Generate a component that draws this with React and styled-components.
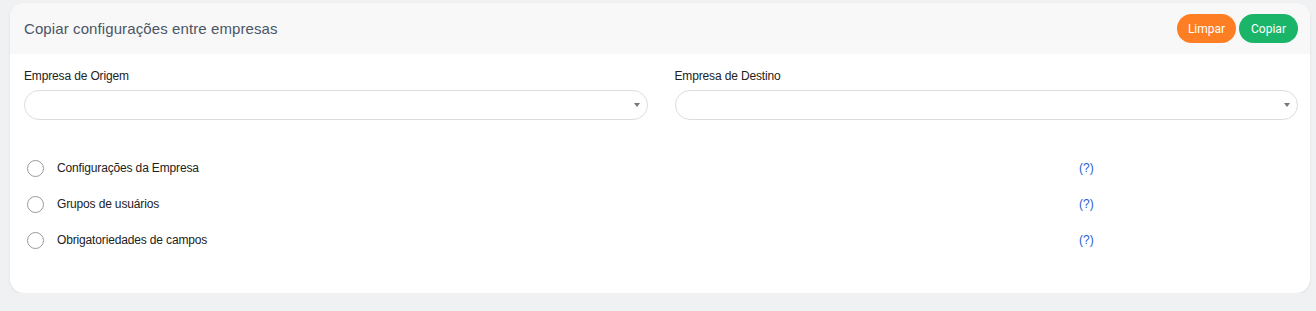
import styled, { createGlobalStyle } from 'styled-components'

const GlobalStyle = createGlobalStyle`
    html, body {
        margin: 0;
        padding: 0;
        background: #f0f1f3;
        font-family: "Liberation Sans", Arial, sans-serif;
    }
`;

const Page = styled.div`
    padding: 3px 6px 0 10px;
`;

const Card = styled.div`
    background: #ffffff;
    border-radius: 14px;
    box-shadow: 0 1px 3px rgba(0, 0, 0, 0.08);
    overflow: hidden;
    height: 290px;
`;

const Header = styled.div`
    display: flex;
    flex-direction: row;
    justify-content: space-between;
    align-items: center;
    background: #f8f8f8;
    height: 51px;
    padding: 0 12px 0 14px;
`;

const Title = styled.span`
    font-size: 15px;
    letter-spacing: 0.1px;
    color: #4a5566;
`;

const Actions = styled.div`
    display: flex;
    gap: 3px;
`;

const ActionButton = styled.button`
    background-color: ${p => p.$color};
    color: #ffffff;
    border: none;
    outline: none;
    border-radius: 15px;
    height: 29px;
    padding: 0 9px;
    min-width: 59px;
    font-family: Roboto, "Liberation Sans", sans-serif;
    font-size: 12px;
    cursor: pointer;
`;

const Body = styled.div`
    padding: 15px 12px 0 14px;
`;

const FieldsGrid = styled.div`
    display: grid;
    grid-template-columns: 1fr 1fr;
    column-gap: 27px;
`;

const Field = styled.div`
    display: flex;
    flex-direction: column;
`;

const Label = styled.label`
    font-size: 12px;
    letter-spacing: -0.15px;
    color: #222;
    margin-bottom: 7px;
`;

const SelectBox = styled.div`
    position: relative;
    height: 28px;
    border: 1px solid #dcdcdc;
    border-radius: 15px;
    background: #fff;
`;

const Caret = styled.span`
    position: absolute;
    right: 7px;
    top: 12px;
    width: 0;
    height: 0;
    border-left: 3px solid transparent;
    border-right: 3px solid transparent;
    border-top: 4px solid #777;
`;

const OptionList = styled.div`
    display: flex;
    flex-direction: column;
    margin-top: 30px;
`;

const OptionRow = styled.div`
    display: grid;
    grid-template-columns: 1055px auto;
    align-items: center;
    height: 36px;
`;

const OptionLabel = styled.div`
    display: flex;
    align-items: center;
    gap: 13px;
    padding-left: 3px;
    font-size: 12px;
    letter-spacing: -0.15px;
    color: #222;
`;

const Radio = styled.span`
    width: 15px;
    height: 15px;
    border: 1px solid #999;
    border-radius: 50%;
    background: #fff;
`;

const Help = styled.span`
    font-size: 12px;
    color: #1f5fd1;
    cursor: pointer;
`;

const options = [
    'Configurações da Empresa',
    'Grupos de usuários',
    'Obrigatoriedades de campos',
];

export default function App() {
    return (
        <Page>
            <GlobalStyle />
            <Card>
                <Header>
                    <Title>Copiar configurações entre empresas</Title>
                    <Actions>
                        <ActionButton $color="#fd7e23">Limpar</ActionButton>
                        <ActionButton $color="#1ab569">Copiar</ActionButton>
                    </Actions>
                </Header>
                <Body>
                    <FieldsGrid>
                        <Field>
                            <Label>Empresa de Origem</Label>
                            <SelectBox><Caret /></SelectBox>
                        </Field>
                        <Field>
                            <Label>Empresa de Destino</Label>
                            <SelectBox><Caret /></SelectBox>
                        </Field>
                    </FieldsGrid>
                    <OptionList>
                        {options.map(o => (
                            <OptionRow key={o}>
                                <OptionLabel><Radio />{o}</OptionLabel>
                                <Help>(?)</Help>
                            </OptionRow>
                        ))}
                    </OptionList>
                </Body>
            </Card>
        </Page>
    );
}
